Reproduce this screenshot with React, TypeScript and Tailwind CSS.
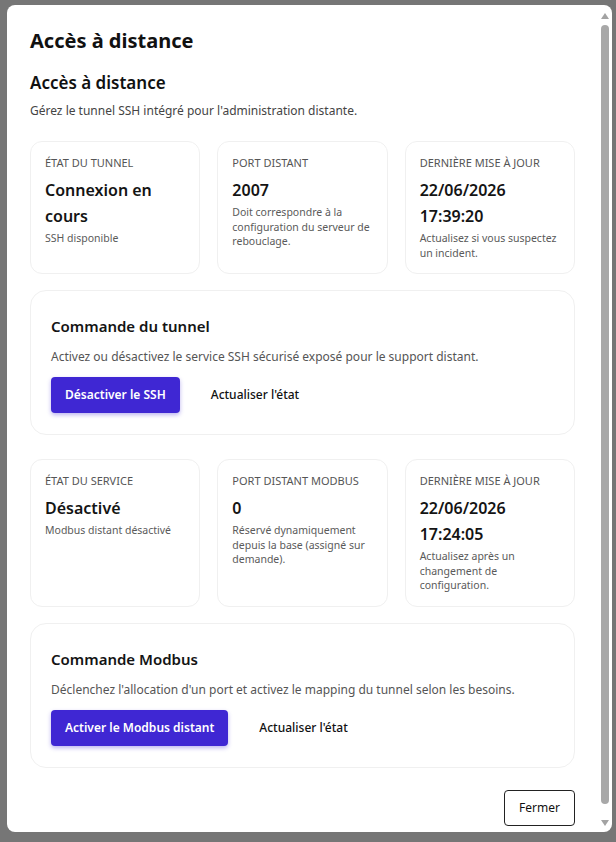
type Stat = {
  label: string
  value: string[]
  hint: string
}

const tunnelStats: Stat[] = [
  { label: 'État du tunnel', value: ['Connexion en cours'], hint: 'SSH disponible' },
  {
    label: 'Port distant',
    value: ['2007'],
    hint: 'Doit correspondre à la configuration du serveur de rebouclage.',
  },
  {
    label: 'Dernière mise à jour',
    value: ['22/06/2026', '17:39:20'],
    hint: 'Actualisez si vous suspectez un incident.',
  },
]

const modbusStats: Stat[] = [
  { label: 'État du service', value: ['Désactivé'], hint: 'Modbus distant désactivé' },
  {
    label: 'Port distant Modbus',
    value: ['0'],
    hint: 'Réservé dynamiquement depuis la base (assigné sur demande).',
  },
  {
    label: 'Dernière mise à jour',
    value: ['22/06/2026', '17:24:05'],
    hint: 'Actualisez après un changement de configuration.',
  },
]

function StatGrid({ stats }: { stats: Stat[] }) {
  return (
    <div className="grid grid-cols-3 gap-[17px]">
      {stats.map((s) => (
        <div key={s.label} className="rounded-xl border border-[#f0f0f0] px-[14px] pt-[13px] pb-[13px]">
          <div className="text-[11px] leading-4 uppercase text-[#555]">{s.label}</div>
          <div className="mt-[6px] text-[16px] leading-[26px] font-semibold text-[#141414]">
            {s.value.map((v) => (
              <div key={v}>{v}</div>
            ))}
          </div>
          <p className="mt-[2px] text-[10.5px] leading-[14.5px] text-[#5a5a5a]">{s.hint}</p>
        </div>
      ))}
    </div>
  )
}

function CommandCard({
  title,
  description,
  action,
}: {
  title: string
  description: string
  action: string
}) {
  return (
    <div className="rounded-2xl border border-[#f0f0f0] px-[20px] pt-[23px] pb-[21px]">
      <h3 className="text-[15px] leading-6 font-semibold text-[#141414]">{title}</h3>
      <p className="mt-[9px] text-[12px] leading-5 text-[#555]">{description}</p>
      <div className="mt-[10px] flex items-center gap-[15px]">
        <button className="h-9 rounded-[4px] bg-[#3f27d3] px-[14px] text-[12px] font-semibold text-white shadow-[0_2px_4px_rgba(63,39,211,0.35)]">
          {action}
        </button>
        <button className="h-9 px-4 text-[12px] font-medium text-[#111]">Actualiser l'état</button>
      </div>
    </div>
  )
}

// static scrollbar drawn at the right edge of the dialog
function ScrollRail() {
  return (
    <div className="flex w-[14px] shrink-0 flex-col items-center pt-[8px]">
      <svg width="8" height="6" viewBox="0 0 8 6">
        <path d="M4 0 L8 6 L0 6 Z" fill="#a3a3a3" />
      </svg>
      <div className="mt-[6px] h-[779px] w-[8px] rounded-full bg-[#a8a8a8]" />
      <svg className="mt-[16px]" width="8" height="6" viewBox="0 0 8 6">
        <path d="M0 0 L8 0 L4 6 Z" fill="#a3a3a3" />
      </svg>
    </div>
  )
}

export default function App() {
  return (
    <div className="h-[842px] bg-[#767676] pt-[5px] pl-[7px] font-['Noto_Sans',sans-serif]">
      <div className="flex h-[827px] w-[605px] overflow-hidden rounded-lg bg-white">
        <div className="flex-1 px-[23px] pt-[22px]">
          <h1 className="text-[20px] leading-7 font-bold text-[#111]">Accès à distance</h1>
          <h2 className="mt-4 text-[17px] leading-6 font-semibold text-[#111]">Accès à distance</h2>
          <p className="mt-[6px] text-[12px] leading-5 text-[#444]">
            Gérez le tunnel SSH intégré pour l'administration distante.
          </p>

          <div className="mt-5">
            <StatGrid stats={tunnelStats} />
          </div>
          <div className="mt-4">
            <CommandCard
              title="Commande du tunnel"
              description="Activez ou désactivez le service SSH sécurisé exposé pour le support distant."
              action="Désactiver le SSH"
            />
          </div>

          <div className="mt-6">
            <StatGrid stats={modbusStats} />
          </div>
          <div className="mt-4">
            <CommandCard
              title="Commande Modbus"
              description="Déclenchez l'allocation d'un port et activez le mapping du tunnel selon les besoins."
              action="Activer le Modbus distant"
            />
          </div>

          <div className="mt-[22px] flex justify-end">
            <button className="h-9 rounded-[4px] border border-[#222] px-[14px] text-[12px] text-[#111]">
              Fermer
            </button>
          </div>
        </div>
        <ScrollRail />
      </div>
    </div>
  )
}
